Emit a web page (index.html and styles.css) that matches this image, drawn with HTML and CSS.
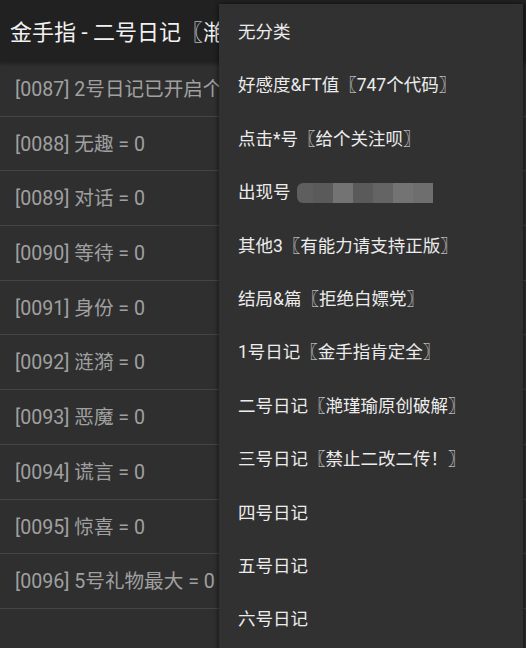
FILE: index.html
```html
<!DOCTYPE html>
<html lang="zh">
<head>
<meta charset="utf-8">
<link rel="stylesheet" href="styles.css">
</head>
<body>
<div class="screen">
  <header class="bar"><span class="title">金手指 - 二号日记〖滟瑾瑜原创破解〗</span></header>
  <ul class="list">
    <li><span class="txt">[0087] 2号日记已开启个数 = 0</span></li>
    <li><span class="txt">[0088] 无趣 = 0</span></li>
    <li><span class="txt">[0089] 对话 = 0</span></li>
    <li><span class="txt">[0090] 等待 = 0</span></li>
    <li><span class="txt">[0091] 身份 = 0</span></li>
    <li><span class="txt">[0092] 涟漪 = 0</span></li>
    <li><span class="txt">[0093] 恶魔 = 0</span></li>
    <li><span class="txt">[0094] 谎言 = 0</span></li>
    <li><span class="txt">[0095] 惊喜 = 0</span></li>
    <li><span class="txt">[0096] 5号礼物最大 = 0</span></li>
    <li class="empty"></li>
  </ul>
  <div class="menu">
    <div class="item">无分类</div>
    <div class="item">好感度&amp;FT值〖747个代码〗</div>
    <div class="item">点击*号〖给个关注呗〗</div>
    <div class="item">出现号<span class="blur"><i class="b1"></i><i class="b2"></i><i class="b3"></i><i class="b2"></i><i class="b4"></i><i class="b3"></i><i class="b5"></i></span></div>
    <div class="item">其他3〖有能力请支持正版〗</div>
    <div class="item">结局&amp;篇〖拒绝白嫖党〗</div>
    <div class="item">1号日记〖金手指肯定全〗</div>
    <div class="item">二号日记〖滟瑾瑜原创破解〗</div>
    <div class="item">三号日记〖禁止二改二传！〗</div>
    <div class="item">四号日记</div>
    <div class="item">五号日记</div>
    <div class="item">六号日记</div>
  </div>
</div>
</body>
</html>
```
FILE: styles.css
```css
html, body {
  margin: 0;
  padding: 0;
  background: #2f2f2f;
}
.screen {
  position: relative;
  width: 526px;
  height: 648px;
  overflow: hidden;
  background: #2f2f2f;
  font-family: Roboto, "Noto Sans CJK SC", sans-serif;
}
.bar {
  height: 59px;
  padding-top: 3px;
  background: #212121;
  color: #f2f2f2;
  font-size: 22px;
  line-height: 59px;
  padding-left: 10px;
  white-space: nowrap;
  overflow: hidden;
  box-shadow: 0 2px 3px rgba(0,0,0,0.3);
  position: relative;
  z-index: 1;
}
.title {
  display: block;
  width: 209px;
  overflow: hidden;
}
.list {
  list-style: none;
  margin: 0;
  padding: 0;
}
.list li {
  height: 50.7px;
  padding-top: 3px;
  line-height: 50.7px;
  border-bottom: 1px solid #454545;
  color: #a0a0a0;
  font-size: 19.6px;
  padding-left: 15px;
  white-space: nowrap;
  overflow: hidden;
}
.txt {
  display: block;
  width: 204px;
  overflow: hidden;
}
.list li.empty {
  border-bottom: none;
}
.menu {
  position: absolute;
  top: 4px;
  left: 219px;
  width: 304px;
  height: 700px;
  padding-top: 2px;
  background: #313131;
  box-shadow: -2px 0 4px rgba(0,0,0,0.35), 2px 0 3px rgba(0,0,0,0.4);
  z-index: 2;
}
.item {
  height: 53.4px;
  line-height: 53.4px;
  padding-left: 19px;
  color: #ececec;
  font-size: 17.5px;
  white-space: nowrap;
  display: flex;
  align-items: center;
}
.blur {
  display: inline-flex;
  height: 20px;
  margin-left: 6px;
}
.blur i {
  display: block;
  width: 20px;
  height: 20px;
}
.blur i.b1 { background: #5e5e5e; border-radius: 6px 0 0 6px; width: 16px; }
.blur i.b2 { background: #5a5a5a; }
.blur i.b3 { background: #737373; }
.blur i.b4 { background: #646464; }
.blur i.b5 { background: #6e6e6e; width: 20px; }
```
